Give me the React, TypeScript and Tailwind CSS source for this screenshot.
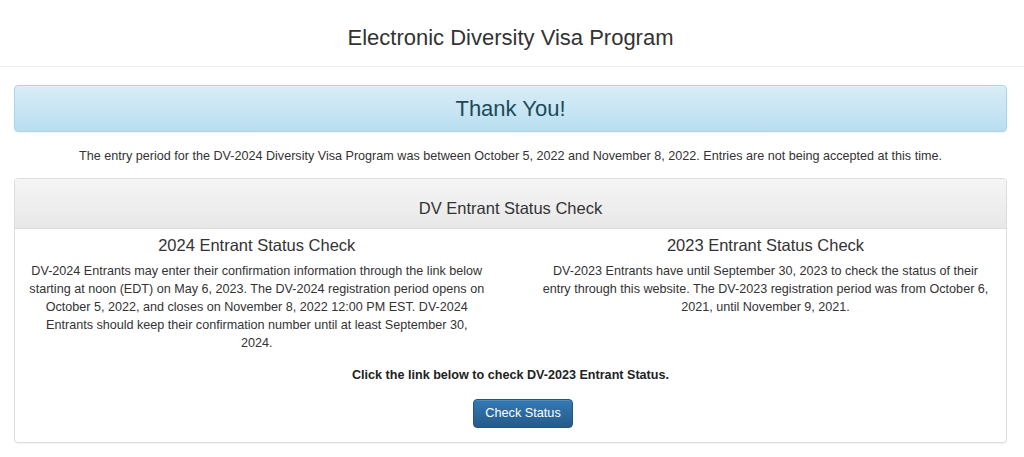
import React from "react";

const font = { fontFamily: '"Liberation Sans", Arial, sans-serif' };

export default function App() {
  return (
    <div className="min-h-screen bg-white text-[#333]" style={font}>
      {/* Top title bar */}
      <header className="h-[67px] border-b border-[#eeeeee] flex items-center justify-center pt-[10px] pr-[3px]">
        <h1 className="text-[22px] text-[#333] leading-none">Electronic Diversity Visa Program</h1>
      </header>

      <main className="pl-[14px] pr-[17px] pt-[18px]">
        {/* Alert */}
        <div className="h-[47px] rounded border border-[#a6d5ec] bg-gradient-to-b from-[#d9edf7] to-[#b9def0] flex items-center justify-center shadow-[inset_0_1px_0_rgba(255,255,255,0.25),0_1px_2px_rgba(0,0,0,0.05)]">
          <h2 className="text-[22px] text-[#1b4b5a] leading-none">Thank You!</h2>
        </div>

        <p className="text-[12.6px] text-center leading-[18px] mt-[15px]">
          The entry period for the DV-2024 Diversity Visa Program was between October 5, 2022 and November 8, 2022. Entries are not being accepted at this time.
        </p>

        {/* Status panel */}
        <section className="mt-[13px] border border-[#dddddd] rounded bg-white shadow-[0_1px_1px_rgba(0,0,0,0.05)]">
          <div className="h-[50px] rounded-t bg-gradient-to-b from-[#f5f5f5] to-[#e8e8e8] border-b border-[#dddddd] flex items-center justify-center pt-[10px]">
            <h3 className="text-[16.5px] text-[#333] leading-none">DV Entrant Status Check</h3>
          </div>

          <div className="pt-[6px] pb-[14px]">
            <div className="flex gap-[58px] pl-[14px]">
              <div className="w-[455.5px] text-center">
                <h4 className="text-[16.5px] leading-[20px] mb-[7px]">2024 Entrant Status Check</h4>
                <p className="text-[12.6px] leading-[18px]">
                  DV-2024 Entrants may enter their confirmation information through the link below starting at noon (EDT) on May 6, 2023. The DV-2024 registration period opens on October 5, 2022, and closes on November 8, 2022 12:00 PM EST. DV-2024 Entrants should keep their confirmation number until at least September 30, 2024.
                </p>
              </div>
              <div className="w-[446px] text-center">
                <h4 className="text-[16.5px] leading-[20px] mb-[7px]">2023 Entrant Status Check</h4>
                <p className="text-[12.6px] leading-[18px]">
                  DV-2023 Entrants have until September 30, 2023 to check the status of their entry through this website. The DV-2023 registration period was from October 6, 2021, until November 9, 2021.
                </p>
              </div>
            </div>

            <p className="mt-[14px] text-[12.6px] leading-[18px] font-bold text-center text-[#222]">
              Click the link below to check DV-2023 Entrant Status.
            </p>

            <div className="mt-[15px] flex justify-center pl-[25px]">
              <button
                type="button"
                className="h-[29px] px-[11px] rounded text-white text-[12.7px] bg-gradient-to-b from-[#337ab7] to-[#265a88] border border-[#245580] shadow-[inset_0_1px_0_rgba(255,255,255,0.15)]"
              >
                Check Status
              </button>
            </div>
          </div>
        </section>
      </main>
    </div>
  );
}
